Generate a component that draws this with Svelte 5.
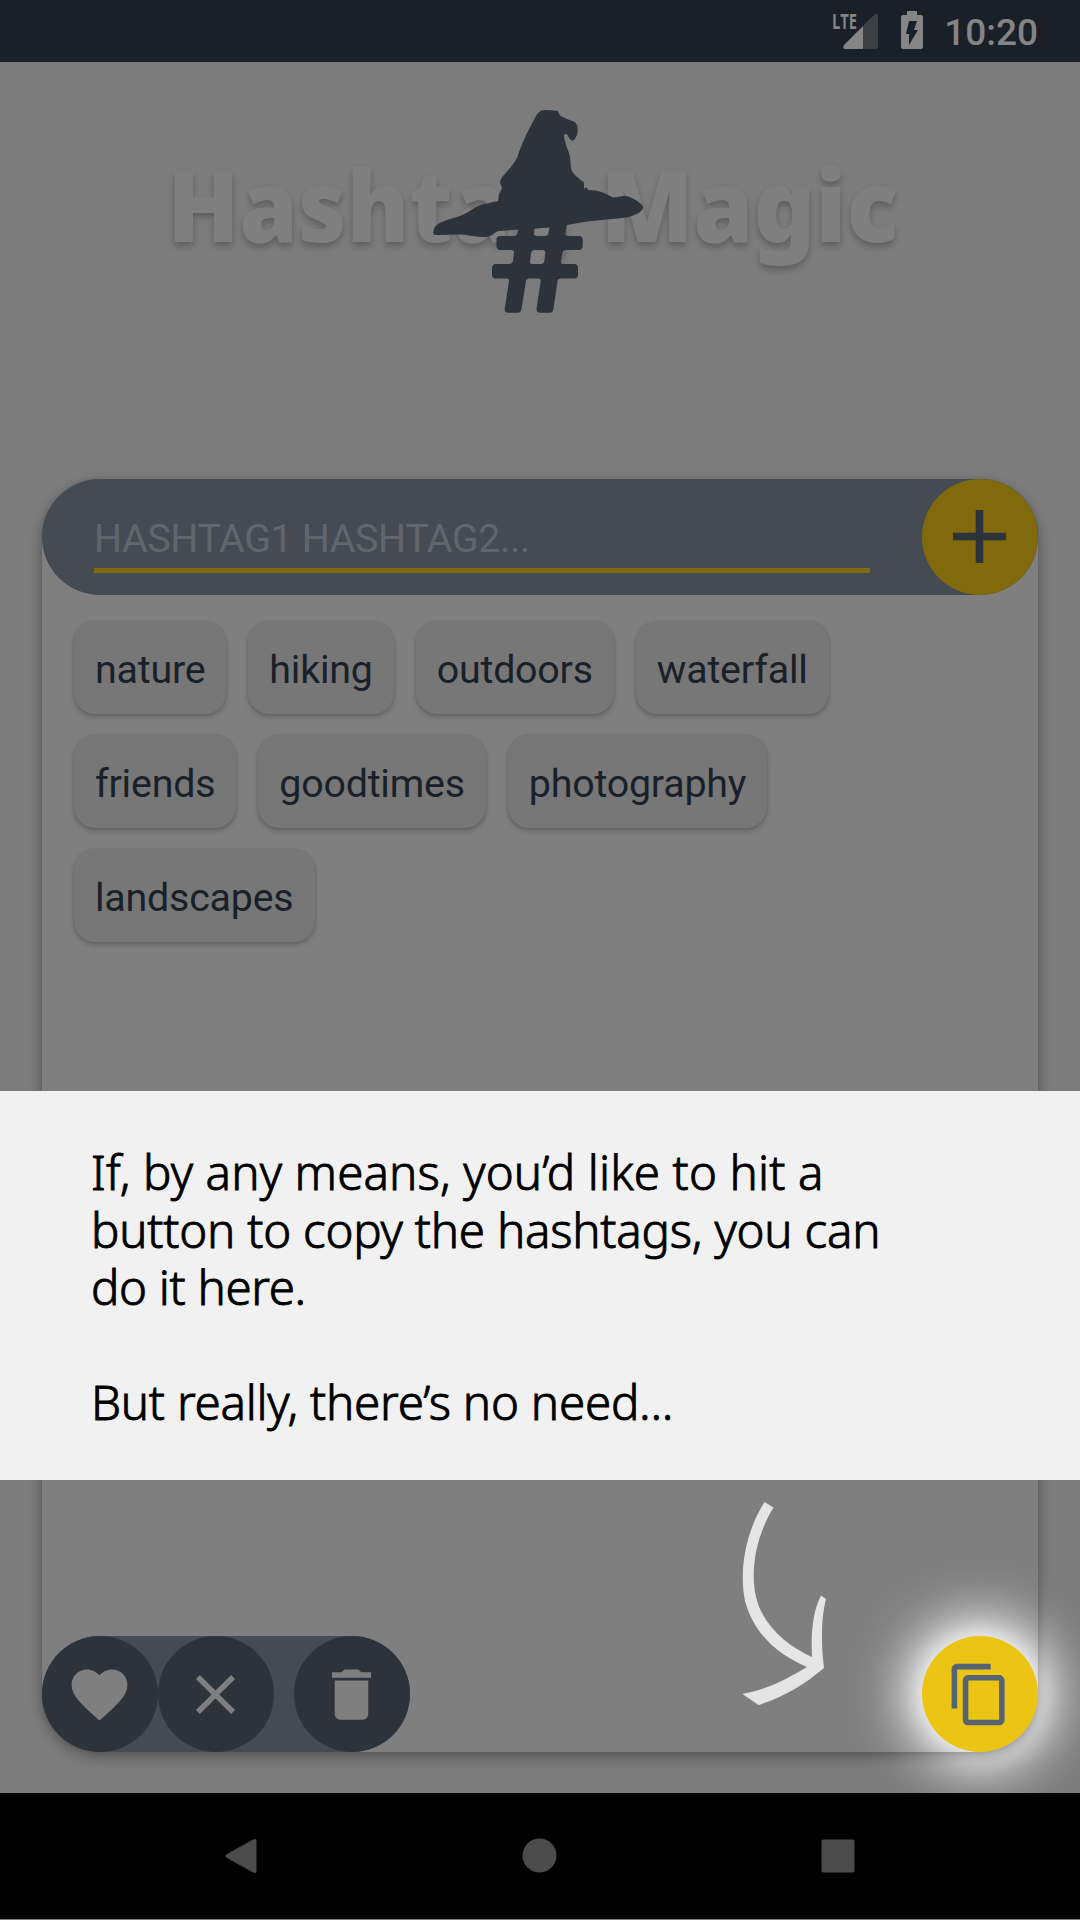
<script lang="ts">
  const tags = ['nature', 'hiking', 'outdoors', 'waterfall', 'friends', 'goodtimes', 'photography', 'landscapes'];
</script>

<div class="screen">
  <header class="status">
    <svg class="signal" width="50" height="60" viewBox="0 -9 50 60">
      <text class="lte" x="2" y="19.500" textLength="25" lengthAdjust="spacingAndGlyphs">LTE</text>
      <path class="weak" d="M33 17 45 5Q48 4 48 7V38Q48 40 46 40H33Z" />
      <path class="strong" d="M33 17V40H15Q12 40 14 36Z" />
    </svg>
    <svg class="battery" width="22" height="38" viewBox="0 0 22 38">
      <path d="M6 0H16V4H20Q22 4 22 6V36Q22 38 20 38H2Q0 38 0 36V6Q0 4 2 4H6Z" />
      <path class="bolt" d="M8 10H16L13 19H17L8 34V23H5Z" />
    </svg>
    <span class="clock">10:20</span>
  </header>

  <main>
    <section class="brand">
      <svg width="1080" height="300" viewBox="0 62 1080 300">
        <text class="title" x="167.500" y="241.5" textLength="404" lengthAdjust="spacingAndGlyphs">Hashtag</text>
        <text class="title" x="600.500" y="241.5" textLength="298" lengthAdjust="spacingAndGlyphs">Magic</text>
        <path class="mark" d="M545 110C540 110 538 113 536 116L527 133C523 142 519 151 517.500 157C513 166 506 172 501.500 178Q499 182 501 185L502 188.500L499 194L498 201C490 203 482 204 476 207C470 211 465 214 460 216C451 219 436 222 434 229C433 233 432 235 438 235L460 234.500C468 235 476 237 485 237C492 237 494 232 499 231L534 228.500L567 225L587 221.500L627 217.500C633 216 643 212 643 207.500C643 203 632 198 627 196C621 195.500 618 197 613 197.500C605 193 599 190 588 190L587 187.500L584 188.500L584 182.500C578 178 573 174 571.500 170C570 163 571 158 569 153C566 145 564 139 564 135Q565 133.500 567 134C569 138 571 142 574 140C578 135 578 132 577.500 127C577 122 573 121 567 119C563 117 559 116 558 111Q552 110 545 110Z" />
        <path class="mark" d="M518 226Q519 236 514 236H500Q496.500 236 496.500 240V246Q496.500 250 500 250H511Q514.500 250 514 253L513 261Q512 264 509 264H496Q492 264 492 268V275Q492 278.500 496 278.500H507Q509.500 278.500 509 281L504.700 309Q504.500 312.700 508 312.700H518Q521 312.700 521.500 309L526 281Q526.500 278.500 529 278.500H538Q541 278.500 540.700 281L536.500 309Q536.500 312.700 540 312.700H550Q553 312.700 553.500 309L557.500 281Q558 278.500 561 278.500H574Q578 278.500 578 275V268Q578 264 574 264H563Q560.500 264 561 261L562.500 253Q563 250 566 250H578Q582.700 250 582.700 246V240Q582.700 236 579 236H568Q565 236 565.500 233L567 224ZM534.500 228.500 549.500 227.500 548.500 233Q548 236 545 236H536.500Q533.500 236 534 233ZM534.500 250H542Q545.500 250 545.300 253L544.500 260Q544 264 541 264H532Q529.500 264 530 261L531 253.500Q531.500 250 534.500 250Z" fill-rule="evenodd" />
      </svg>
    </section>

    <section class="card">
      <div class="entry">
        <div class="field">HASHTAG1 HASHTAG2...</div>
        <button class="round add" aria-label="Add">
          <svg width="91" height="91" viewBox="0 0 24 24"><path d="M19 13h-6v6h-2v-6H5v-2h6V5h2v6h6z" /></svg>
        </button>
      </div>
      <div class="chips">
        {#each tags as tag}
          <span class="chip">{tag}</span>
        {/each}
      </div>
      <div class="toolbar">
        <div class="tools">
          <button class="round dark" aria-label="Favourite">
            <svg width="67" height="67" viewBox="0 0 24 24"><path d="M12 21.350l-1.450-1.320C5.400 15.360 2 12.280 2 8.500 2 5.420 4.420 3 7.500 3c1.740 0 3.410.81 4.500 2.090C13.090 3.810 14.760 3 16.500 3 19.580 3 22 5.420 22 8.500c0 3.780-3.400 6.860-8.550 11.540z" /></svg>
          </button>
          <button class="round dark" aria-label="Clear">
            <svg width="67" height="67" viewBox="0 0 24 24"><path d="M19 6.410 17.590 5 12 10.590 6.410 5 5 6.410 10.590 12 5 17.590 6.410 19 12 13.410 17.590 19 19 17.590 13.410 12z" /></svg>
          </button>
          <button class="round dark trash" aria-label="Delete">
            <svg width="67" height="67" viewBox="0 0 24 24"><path d="M6 19c0 1.100.9 2 2 2h8c1.100 0 2-.9 2-2V7H6zM19 4h-3.500l-1-1h-5l-1 1H5v2h14z" /></svg>
          </button>
        </div>
        <button class="round copy" aria-label="Copy">
          <svg width="67" height="67" viewBox="0 0 24 24"><path d="M16 1H4c-1.100 0-2 .9-2 2v14h2V3h12zm3 4H8c-1.100 0-2 .9-2 2v14c0 1.100.9 2 2 2h11c1.100 0 2-.9 2-2V7c0-1.100-.9-2-2-2zm0 16H8V7h11z" /></svg>
        </button>
      </div>
    </section>
  </main>

  <nav>
    <svg width="1080" height="126" viewBox="0 1793 1080 126">
      <path d="M227 1854 253 1839.500Q256.500 1838 256.500 1841V1871Q256.500 1874 253 1872.500L227 1858Q224 1856 227 1854Z" />
      <circle cx="539.500" cy="1855.500" r="17" />
      <rect x="821.500" y="1839.500" width="33" height="33" rx="2" />
    </svg>
  </nav>

  <aside class="message">
    <p class="l1">If, by any means, you’d like to hit a</p>
    <p class="l2">button to copy the hashtags, you can</p>
    <p class="l3">do it here.</p>
    <p class="l4">But really, there’s no need...</p>
  </aside>
  <svg class="arrow" width="90" height="210" viewBox="0 0 90 210">
    <path d="M24.500 2 33.500 7.500C16 36 10 70 16 97C23 126 48 146 72 157C71 135 72 113 81 95.500L86 99C81 118 81 144 84 168C65 184 44 197 18.500 205L2.500 194C25 190 46 180 67 167C38 155 14 134 5 101C-1 71 5 33 24.500 2Z" />
  </svg>
</div>

<style>
  :global(body) { margin: 0; background: #7f7f7f; }
  .screen { position: relative; display: flex; flex-direction: column; width: 1080px; height: 1920px; overflow: hidden; background: #7f7f7f; font-family: Roboto, sans-serif; }
  .status { display: flex; flex: none; height: 62px; background: #192028; color: #858585; padding-right: 42px; box-sizing: border-box; justify-content: flex-end; align-items: flex-start; }
  .signal { margin: 0 21px 0 0; }
  .lte { font: 700 22px "Open Sans", sans-serif; fill: #858585; }
  .weak { fill: #3a4145; }
  .strong, .battery { fill: #858585; }
  .battery { margin: 11px 21px 0 0; }
  .bolt { fill: #192028; }
  .clock { font-size: 37px; font-weight: 500; line-height: 65px; }
  main { height: 1731px; display: flex; flex-direction: column; background: #7c7c7c; box-sizing: border-box; padding-bottom: 41px; overflow: hidden; }
  .brand { height: 417px; flex: none; }
  .brand svg, nav svg { display: block; }
  .title { font: 900 99px "Noto Sans", sans-serif; fill: #7f7f7f; filter: drop-shadow(0 4px 3px rgba(0, 0, 0, .24)); }
  .mark { fill: #2d333b; }
  .card { position: relative; isolation: isolate; flex: 1; margin: 0 42px; display: flex; flex-direction: column; background: #7f7f7f; border-radius: 58px; }
  .card::after { content: ""; position: absolute; inset: 0; border-radius: 58px; box-shadow: 0 5px 13px rgba(0, 0, 0, .3), 0 0 4px rgba(0, 0, 0, .1); pointer-events: none; z-index: 1; }
  .entry { display: flex; justify-content: space-between; height: 116px; background: #444b52; border-radius: 58px; }
  .field { width: 776px; height: 94px; box-sizing: border-box; margin-left: 52px; padding-top: 36px; border-bottom: 5px solid #806a0b; color: #62666b; font-size: 39.400px; letter-spacing: -.4px; line-height: 48px; }
  .round { display: flex; align-items: center; justify-content: center; width: 116px; height: 116px; padding: 0 1px 0 0; box-sizing: border-box; border: 0; border-radius: 50%; flex: none; }
  .add { background: #806a0b; fill: #2d333b; padding: 0 2px 1px 0; }
  .chips { display: flex; flex-wrap: wrap; gap: 21px 22px; width: 780px; padding: 26px 32px; }
  .chip { height: 93px; box-sizing: border-box; padding: 2px 21px 0; border-radius: 21px; background: #777; color: #192028; font-size: 39.400px; letter-spacing: -.22px; line-height: 93px; box-shadow: 0 3px 5px rgba(0, 0, 0, .22), 0 0 2px rgba(0, 0, 0, .1); }
  .toolbar { display: flex; justify-content: space-between; margin-top: auto; }
  .tools { display: flex; background: #444b52; border-radius: 58px; }
  .dark { background: #2d333b; fill: #7f7f7f; }
  .trash { margin-left: 20px; }
  .copy { background: #ebc414; fill: #566370; box-shadow: 0 0 52px 20px rgba(255, 255, 255, .9), 0 0 20px 4px rgba(255, 255, 255, .5); }
  nav { height: 126px; flex: none; background: #000; fill: #4b4b4b; }
  .message { position: absolute; left: 0; top: 1091px; width: 1080px; height: 389px; box-sizing: border-box; padding: 52px 0 0 91px; background: #f1f1f1; color: #000; font: 300 47.500px/57.500px "Noto Sans", sans-serif; -webkit-text-stroke: .9px #000; white-space: nowrap; }
  .message p { margin: 0; width: fit-content; }
  .message .l1 { letter-spacing: .13px; }
  .message .l2 { letter-spacing: -.22px; }
  .message .l3 { letter-spacing: -.33px; }
  .message .l4 { margin-top: 57.500px; letter-spacing: -.23px; }
  .arrow { position: absolute; left: 740px; top: 1500px; fill: #e5e5e5; }
</style>
